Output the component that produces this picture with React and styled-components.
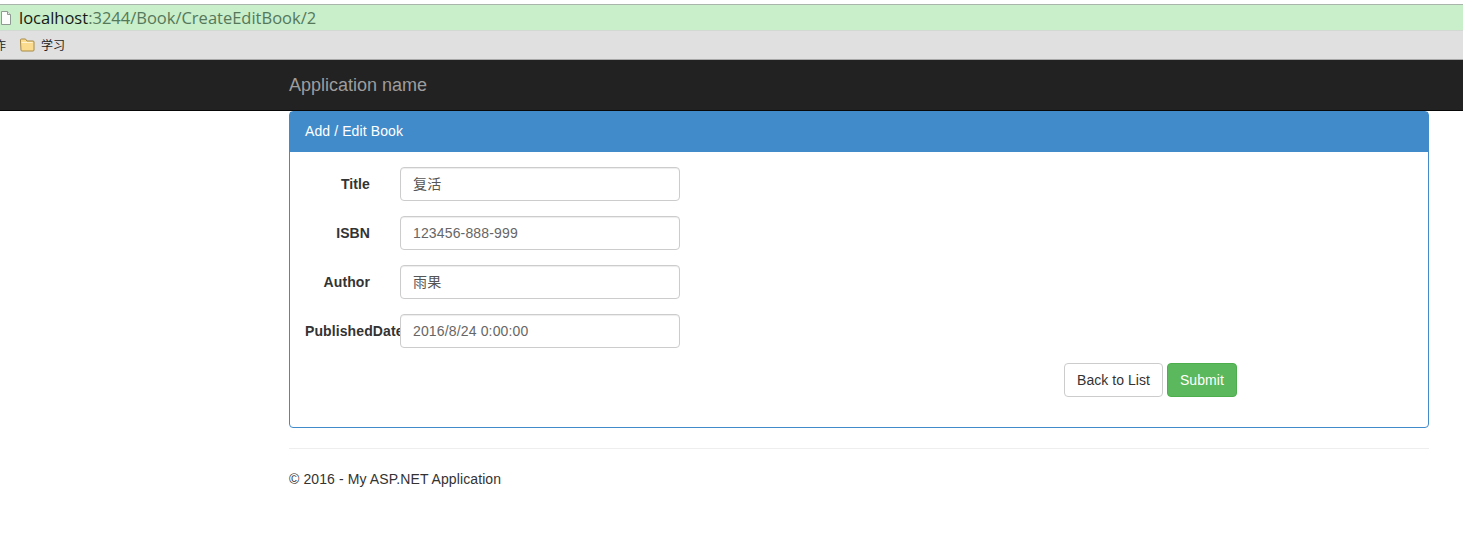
import React from 'react';
import styled, { createGlobalStyle } from 'styled-components';

const GlobalStyle = createGlobalStyle`
  html, body {
    margin: 0;
    padding: 0;
    background: #fff;
  }
  body {
    font-family: "Liberation Sans", Arial, sans-serif;
    font-size: 14px;
    line-height: 20px;
    letter-spacing: 0.1px;
    color: #333;
    overflow: hidden;
  }
`;

const AddressBar = styled.div`
  display: flex;
  align-items: center;
  height: 25px;
  margin-top: 4px;
  background: #c8eeca;
  border-top: 1px solid #a9b5aa;
  border-bottom: 1px solid #d2d8d2;
  font-family: "Open Sans", sans-serif;
  font-size: 16.5px;
  letter-spacing: 0;
  color: #55785a;
  overflow: hidden;
`;

const PageIcon = styled.svg`
  flex: none;
  width: 14px;
  height: 16px;
  margin: 0 6px 0 -1px;
`;

const Host = styled.span`
  color: #151a15;
`;

const BookmarkBar = styled.div`
  display: flex;
  align-items: center;
  height: 28px;
  background: #e0e0e0;
  border-bottom: 1px solid #a8a8a8;
  font-family: "Noto Sans CJK SC", sans-serif;
  font-size: 12px;
  letter-spacing: 0;
  color: #222;
  overflow: hidden;
`;

const ClippedBookmark = styled.span`
  margin: 0 13px 0 -6px;
`;

const FolderIcon = styled.svg`
  flex: none;
  width: 16px;
  height: 14px;
  margin-right: 6px;
`;

const Navbar = styled.header`
  height: 50px;
  padding-left: 289px;
  display: flex;
  align-items: center;
  background: #222;
  border-bottom: 1px solid #080808;
`;

const Brand = styled.a`
  font-size: 18px;
  letter-spacing: 0;
  color: #9d9d9d;
`;

const Container = styled.main`
  width: 1140px;
  margin-left: 289px;
`;

const Panel = styled.section`
  height: 317px;
  box-sizing: border-box;
  border: 1px solid #428bca;
  border-radius: 4px;
  background: #fff;
`;

const PanelHeading = styled.div`
  height: 40px;
  padding: 9px 15px;
  box-sizing: border-box;
  background: #428bca;
  color: #fff;
`;

const PanelBody = styled.div`
  display: flex;
  flex-direction: column;
  gap: 15px;
  padding: 15px;
`;

const FormRow = styled.div`
  display: flex;
  align-items: center;
  gap: 30px;
`;

const Label = styled.label`
  width: 65px;
  flex: none;
  text-align: right;
  font-weight: 700;
  white-space: nowrap;
`;

const Input = styled.input`
  width: 280px;
  height: 34px;
  box-sizing: border-box;
  padding: ${(p) => (p.$cjk ? '5px 12px 7px' : '6px 12px')};
  border: 1px solid #ccc;
  border-radius: 4px;
  background: #fff;
  color: ${(p) => (p.$cjk ? '#555' : '#666')};
  font-family: "Liberation Sans", Arial, "Noto Sans CJK SC", sans-serif;
  font-size: 14px;
  letter-spacing: 0.15px;
  box-shadow: inset 0 1px 1px rgba(0, 0, 0, 0.075);
`;

const Actions = styled.div`
  display: flex;
  gap: 4px;
  margin-left: 759px;
`;

const Button = styled.button`
  height: 34px;
  padding: 6px 12px;
  box-sizing: border-box;
  border: 1px solid ${(p) => (p.$primary ? '#4cae4c' : '#ccc')};
  border-radius: 4px;
  background: ${(p) => (p.$primary ? '#5cb85c' : '#fff')};
  color: ${(p) => (p.$primary ? '#fff' : '#333')};
  font-family: "Liberation Sans", Arial, sans-serif;
  font-size: 14px;
  letter-spacing: 0.05px;
`;

const Divider = styled.hr`
  margin: 20px 0 20px;
  border: 0;
  border-top: 1px solid #eee;
`;

const Footer = styled.footer`
  padding-top: 0;
`;

const fields = [
  { label: 'Title', value: '复活', cjk: true },
  { label: 'ISBN', value: '123456-888-999' },
  { label: 'Author', value: '雨果', cjk: true },
  { label: 'PublishedDate', value: '2016/8/24 0:00:00' },
];

const App = () => (
  <>
    <GlobalStyle />
    <AddressBar>
      <PageIcon viewBox="0 0 14 16">
        <path d="M2.5 1.5h6l3 3v10h-9z" fill="#fdfdfd" stroke="#8f9a92" />
        <path d="M8.5 1.5v3h3" fill="#e6ebe6" stroke="#8f9a92" />
      </PageIcon>
      <span>
        <Host>localhost</Host>:3244/Book/CreateEditBook/2
      </span>
    </AddressBar>
    <BookmarkBar>
      <ClippedBookmark>作</ClippedBookmark>
      <FolderIcon viewBox="0 0 16 14">
        <path
          d="M1.5 3V2q0-1 1-1h4l1.500 2h6q1 0 1 1v8q0 1-1 1h-11q-1 0-1-1z"
          fill="#fbdc8f"
          stroke="#a88a45"
        />
        <path d="M2.500 4.500h11" stroke="#fff3cf" />
      </FolderIcon>
      <span>学习</span>
    </BookmarkBar>
    <Navbar>
      <Brand>Application name</Brand>
    </Navbar>
    <Container>
      <Panel>
        <PanelHeading>Add / Edit Book</PanelHeading>
        <PanelBody>
          {fields.map((f) => (
            <FormRow key={f.label}>
              <Label>{f.label}</Label>
              <Input defaultValue={f.value} $cjk={f.cjk} />
            </FormRow>
          ))}
          <Actions>
            <Button>Back to List</Button>
            <Button $primary>Submit</Button>
          </Actions>
        </PanelBody>
      </Panel>
      <Divider />
      <Footer>© 2016 - My ASP.NET Application</Footer>
    </Container>
  </>
);

export default App;
